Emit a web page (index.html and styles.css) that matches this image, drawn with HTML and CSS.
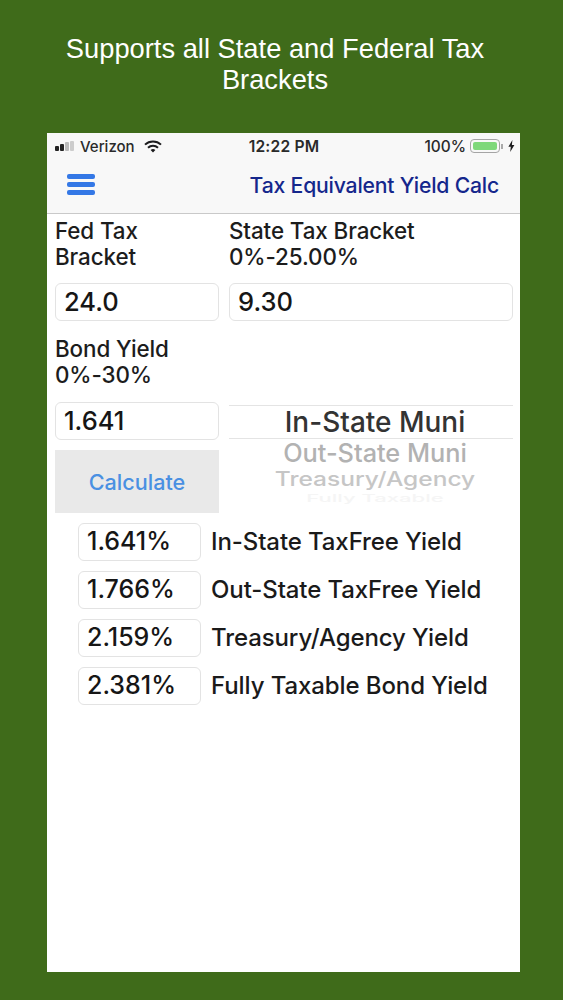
FILE: index.html
```html
<!DOCTYPE html>
<html lang="en">
<head>
<meta charset="utf-8">
<title>Tax Equivalent Yield Calc</title>
<link rel="stylesheet" href="styles.css">
</head>
<body>
<h1 class="headline">Supports all State and Federal Tax Brackets</h1>
<main class="phone">
  <div class="status">
    <div class="status-left">
      <span class="signal"><i class="s1"></i><i class="s2"></i><i class="s3"></i><i class="s4"></i></span>
      <span>Verizon</span>
      <svg class="wifi" viewBox="0 0 18 13" width="18" height="13"><path d="M1 4.6a11.6 11.6 0 0 1 16 0" fill="none" stroke="#1c1c1e" stroke-width="2"/><path d="M4 7.7a7.2 7.2 0 0 1 10 0" fill="none" stroke="#1c1c1e" stroke-width="2"/><path d="M6.6 10.1 9 12.6l2.4-2.5a3.4 3.4 0 0 0-4.8 0z" fill="#1c1c1e"/></svg>
    </div>
    <div class="status-time">12:22 PM</div>
    <div class="status-right">
      <span>100%</span>
      <span class="battery"><span class="battery-fill"></span></span>
      <span class="battery-tip"></span>
      <svg class="bolt" viewBox="0 0 7 12" width="7" height="12"><path d="M4.4 0 .4 6.8h2.4L2.2 12l4.2-7H3.9z" fill="#1c1c1e"/></svg>
    </div>
  </div>
  <nav class="nav">
    <div class="menu"><i></i><i></i><i></i></div>
    <div class="nav-title">Tax Equivalent Yield Calc</div>
  </nav>
  <section class="form">
    <div class="label">Fed Tax<br>Bracket</div>
    <div class="label">State Tax Bracket<br>0%-25.00%</div>
    <div class="field">24.0</div>
    <div class="field">9.30</div>
    <div class="label label-yield">Bond Yield<br>0%-30%</div>
    <div class="spacer"></div>
    <div class="left-stack">
      <div class="field">1.641</div>
      <button class="calc">Calculate</button>
    </div>
    <div class="picker">
      <div class="pick pick-selected">In-State Muni</div>
      <div class="pick pick-2">Out-State Muni</div>
      <div class="pick pick-3">Treasury/Agency</div>
      <div class="pick pick-4">Fully Taxable</div>
    </div>
  </section>
  <section class="results">
    <div class="row"><div class="field result">1.641%</div><div class="result-label">In-State TaxFree Yield</div></div>
    <div class="row"><div class="field result">1.766%</div><div class="result-label">Out-State TaxFree Yield</div></div>
    <div class="row"><div class="field result">2.159%</div><div class="result-label">Treasury/Agency Yield</div></div>
    <div class="row"><div class="field result">2.381%</div><div class="result-label">Fully Taxable Bond Yield</div></div>
  </section>
</main>
</body>
</html>
```
FILE: styles.css
```css
* { box-sizing: border-box; }
html, body { margin: 0; height: 1000px; overflow: hidden; }
body {
  background: #3f6b1a;
  font-family: Inter, "Liberation Sans", sans-serif;
  padding: 33px 47px 0;
}
.headline {
  margin: 0 0 0 8px;
  width: 440px;
  height: 100px;
  color: #fff;
  font-family: "Liberation Sans", Arial, sans-serif;
  font-size: 27.3px;
  font-weight: 400;
  line-height: 31px;
  text-align: center;
}
.phone {
  width: 473px;
  height: 839px;
  background: #fff;
  color: #1a1a1a;
}
.status {
  height: 26px;
  background: #f8f8f8;
  display: grid;
  grid-template-columns: 1fr auto 1fr;
  align-items: center;
  padding: 0 5px 0 8px;
  font-size: 15px;
  font-weight: 500;
  color: #2a2a2a;
}
.status-left { display: flex; align-items: center; gap: 6px; }
.status-left .wifi { margin-left: 3px; }
.signal { display: flex; align-items: flex-end; gap: 1px; height: 10px; }
.signal i { width: 4px; background: #222; border-radius: 1px; }
.signal .s1 { height: 5px; }
.signal .s2 { height: 7px; }
.signal .s3 { height: 9px; background: #bbb; }
.signal .s4 { height: 10px; background: #ccc; }
.status-time { font-weight: 600; font-size: 15.6px; letter-spacing: .2px; margin-left: -2px; }
.status-right { display: flex; align-items: center; justify-content: flex-end; font-size: 15.4px; }
.battery {
  width: 30px;
  height: 14px;
  margin-left: 4px;
  padding: 2px;
  border: 1px solid #a5a5a5;
  border-radius: 4px;
  display: flex;
}
.battery-fill { flex: 1; background: #7ed87a; border-radius: 2px; }
.battery-tip { width: 2px; height: 5px; margin: 0 5px 0 1px; background: #aaa; }
.nav {
  height: 55px;
  background: #f8f8f8;
  border-bottom: 1px solid #c9c9c9;
  display: flex;
  align-items: center;
  justify-content: space-between;
  padding: 0 21px 3px 20px;
}
.menu { width: 28px; display: flex; flex-direction: column; gap: 3px; }
.menu i { height: 5px; background: #3478e6; border-radius: 2px; }
.nav-title { color: #15278c; font-size: 21.2px; font-weight: 500; letter-spacing: -.2px; }
.form {
  display: grid;
  grid-template-columns: 164px 284px;
  column-gap: 10px;
  padding: 4px 0 0 8px;
}
.label { font-size: 22.4px; font-weight: 500; line-height: 26px; color: #1c1c1c; letter-spacing: -.1px; white-space: nowrap; }
.field {
  height: 38px;
  border: 1px solid #e3e3e3;
  border-radius: 6px;
  padding: 0 8px 2px;
  display: flex;
  align-items: center;
  font-size: 25.5px;
  font-weight: 500;
  color: #161616;
  background: #fff;
  margin-top: 13px;
}
.label-yield { margin-top: 15px; height: 66px; }
.spacer { height: 66px; }
.left-stack { display: flex; flex-direction: column; }
.left-stack .field { margin-top: 0; }
.calc {
  height: 63px;
  margin-top: 10px;
  border: 0;
  background: #e9e9e9;
  color: #4a90e2;
  font-family: inherit;
  font-size: 21.6px;
  font-weight: 500;
}
.picker {
  height: 100px;
  margin-top: 3px;
  text-align: center;
}
.pick { white-space: nowrap; padding-left: 8px; }
.pick-selected {
  height: 34px;
  line-height: 33px;
  font-size: 28px;
  font-weight: 500;
  color: #333;
  border-top: 1px solid #e4e4e4;
  border-bottom: 1px solid #e4e4e4;
}
.pick-2 { height: 28px; line-height: 28px; font-size: 25.3px; color: #b2b2b2; font-weight: 500; }
.pick-3 { height: 24px; line-height: 24px; font-size: 24.5px; color: #c6c6c6; font-weight: 500; transform: scaleY(.8); }
.pick-4 { height: 14px; line-height: 14px; font-size: 22px; color: #f5f5f5; font-weight: 500; transform: scaleY(.45); }
.results {
  display: flex;
  flex-direction: column;
  gap: 10px;
  padding: 10px 0 0 31px;
}
.row { display: flex; align-items: center; gap: 10px; }
.result { width: 123px; margin-top: 0; font-size: 25px; }
.result-label { font-size: 24px; font-weight: 500; color: #1a1a1a; letter-spacing: -.1px; white-space: nowrap; padding-bottom: 1px; }
```
